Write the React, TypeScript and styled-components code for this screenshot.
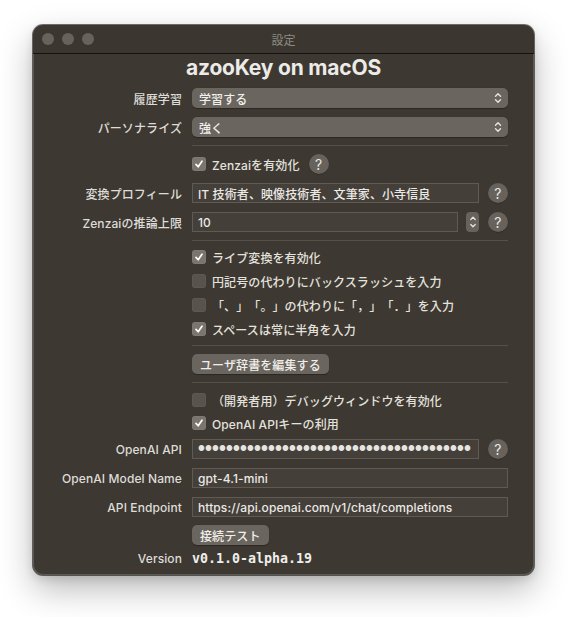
import React from "react";
import styled, { createGlobalStyle } from "styled-components";

const Global = createGlobalStyle`
  html, body { margin: 0; padding: 0; background: #ffffff; }
  body {
    font-family: Inter, "Noto Sans CJK JP", sans-serif;
    -webkit-font-smoothing: antialiased;
    text-spacing-trim: space-all;
  }
`;

const Page = styled.div`
  width: 568px;
  height: 617px;
  padding: 25px 0 0 33px;
  box-sizing: border-box;
`;

const Window = styled.div`
  width: 501px;
  height: 550px;
  box-sizing: border-box;
  background: #3d3831;
  border-radius: 10px;
  overflow: hidden;
  box-shadow: 0 0 0 1px rgba(0, 0, 0, 0.55), inset 0 0 0 1px rgba(255, 255, 255, 0.16),
    0 14px 34px rgba(0, 0, 0, 0.28), 0 4px 10px rgba(0, 0, 0, 0.12);
  display: flex;
  flex-direction: column;
`;

const TitleBar = styled.div`
  height: 28px;
  flex: none;
  display: flex;
  align-items: center;
  position: relative;
  background: #3b3730;
  border-bottom: 1px solid #141311;
`;

const Lights = styled.div`
  display: flex;
  gap: 8px;
  padding-left: 9px;
`;

const Light = styled.span`
  width: 12px;
  height: 12px;
  border-radius: 50%;
  background: #67625b;
`;

const Title = styled.div`
  position: absolute;
  left: 0;
  right: 0;
  text-align: center;
  font-size: 12px;
  color: #8f8a83;
  pointer-events: none;
`;

const Heading = styled.h1`
  margin: 0;
  height: 28px;
  line-height: 28px;
  text-align: center;
  font-size: 21px;
  font-weight: 700;
  color: #ecebe8;
  letter-spacing: -0.2px;
`;

const Form = styled.div`
  display: flex;
  flex-direction: column;
  font-weight: 500;
  letter-spacing: 0.1px;
`;

const Row = styled.div<{ $mt: number; $h?: number }>`
  display: grid;
  grid-template-columns: 149px 316px;
  column-gap: 10px;
  align-items: center;
  margin-top: ${(p) => p.$mt}px;
  height: ${(p) => p.$h ?? 20}px;
`;

const Label = styled.div`
  text-align: right;
  font-size: 12px;
  color: #dedcd8;
  white-space: nowrap;
`;

const Cell = styled.div`
  display: flex;
  align-items: center;
  gap: 9px;
  min-width: 0;
`;

const Separator = styled.div<{ $mt: number }>`
  margin: ${(p) => p.$mt}px 0 0 159px;
  width: 316px;
  height: 1px;
  background: #55504a;
`;

const Popup = styled.div`
  flex: 1;
  height: 20px;
  border-radius: 5px;
  background: #6a655e;
  display: flex;
  align-items: center;
  justify-content: space-between;
  padding: 0 6px 0 7px;
  font-size: 12px;
  color: #f2f0ed;
  box-shadow: 0 0.5px 1px rgba(0, 0, 0, 0.3);
`;

const Field = styled.div`
  flex: 1;
  min-width: 0;
  height: 20px;
  box-sizing: border-box;
  background: #443f38;
  border: 1px solid #5f5a53;
  display: flex;
  align-items: center;
  padding: 0 5px;
  font-size: 12px;
  color: #ebe9e6;
  white-space: nowrap;
  overflow: hidden;
`;

const Secret = styled.div`
  display: flex;
  overflow: hidden;
`;

const Dot = styled.span`
  width: 7px;
  flex: none;
  text-align: center;
  font-size: 7.5px;
  line-height: 10px;
  letter-spacing: 0;
  color: #e6e4e0;
  overflow: hidden;
`;

const Help = styled.div`
  width: 20px;
  height: 20px;
  flex: none;
  border-radius: 50%;
  background: #67625b;
  color: #e9e7e3;
  font-size: 14px;
  font-weight: 400;
  display: flex;
  align-items: center;
  justify-content: center;
  box-shadow: 0 0.5px 1px rgba(0, 0, 0, 0.3);
`;

const Stepper = styled.div`
  width: 13px;
  height: 20px;
  flex: none;
  border-radius: 4px;
  background: #67625b;
  display: flex;
  align-items: center;
  justify-content: center;
  margin-left: -1px;
`;

const CheckLine = styled.label`
  display: flex;
  align-items: center;
  gap: 6px;
  font-size: 12px;
  color: #e4e2de;
  white-space: nowrap;
`;

const Box = styled.span<{ $on: boolean }>`
  width: 14px;
  height: 14px;
  flex: none;
  border-radius: 3px;
  background: ${(p) => (p.$on ? "#7a756d" : "#58534c")};
  box-shadow: inset 0 0 0 0.5px rgba(255, 255, 255, 0.08);
  display: flex;
  align-items: center;
  justify-content: center;
`;

const Button = styled.div`
  height: 20px;
  box-sizing: border-box;
  padding: 0 8px;
  border-radius: 5px;
  background: #6a655e;
  color: #f0eeea;
  font-size: 12px;
  display: flex;
  align-items: center;
  box-shadow: 0 0.5px 1px rgba(0, 0, 0, 0.3);
`;

const Version = styled.div`
  font-family: "DejaVu Sans Mono", "Liberation Mono", monospace;
  font-weight: 700;
  font-size: 13.3px;
  letter-spacing: 0;
  color: #efeeeb;
`;

const UpDown = () => (
  <svg width="8" height="12" viewBox="0 0 8 12" fill="none" stroke="#e8e6e2" strokeWidth="1.4" strokeLinecap="round" strokeLinejoin="round">
    <path d="M1.5 4.2 L4 1.8 L6.5 4.2" />
    <path d="M1.5 7.8 L4 10.2 L6.5 7.8" />
  </svg>
);

const StepArrows = () => (
  <svg width="8" height="16" viewBox="0 0 8 16" fill="none" stroke="#e8e6e2" strokeWidth="1.3" strokeLinecap="round" strokeLinejoin="round">
    <path d="M1.8 5.5 L4 3.3 L6.2 5.5" />
    <path d="M1.8 10.5 L4 12.7 L6.2 10.5" />
  </svg>
);

const Check = () => (
  <svg width="10" height="10" viewBox="0 0 10 10" fill="none" stroke="#ffffff" strokeWidth="1.7" strokeLinecap="round" strokeLinejoin="round">
    <path d="M2 5.4 L4.2 7.8 L8 2.2" />
  </svg>
);

const CheckItem = ({ on, children }: { on: boolean; children: React.ReactNode }) => (
  <CheckLine>
    <Box $on={on}>{on && <Check />}</Box>
    <span>{children}</span>
  </CheckLine>
);

const SECRET_LENGTH = 39;

export default function App() {
  return (
    <>
      <Global />
      <Page>
        <Window>
          <TitleBar>
            <Lights>
              <Light />
              <Light />
              <Light />
            </Lights>
            <Title>設定</Title>
          </TitleBar>
          <Heading>azooKey on macOS</Heading>
          <Form>
            <Row $mt={6}>
              <Label>履歴学習</Label>
              <Cell>
                <Popup>
                  <span>学習する</span>
                  <UpDown />
                </Popup>
              </Cell>
            </Row>
            <Row $mt={9}>
              <Label>パーソナライズ</Label>
              <Cell>
                <Popup>
                  <span>強く</span>
                  <UpDown />
                </Popup>
              </Cell>
            </Row>
            <Separator $mt={8} />
            <Row $mt={8}>
              <Label />
              <Cell>
                <CheckItem on>Zenzaiを有効化</CheckItem>
                <Help>?</Help>
              </Cell>
            </Row>
            <Row $mt={9}>
              <Label>変換プロフィール</Label>
              <Cell>
                <Field>IT 技術者、映像技術者、文筆家、小寺信良</Field>
                <Help>?</Help>
              </Cell>
            </Row>
            <Row $mt={9}>
              <Label>Zenzaiの推論上限</Label>
              <Cell>
                <Field>10</Field>
                <Stepper>
                  <StepArrows />
                </Stepper>
                <Help>?</Help>
              </Cell>
            </Row>
            <Separator $mt={8} />
            <Row $mt={7} $h={18}>
              <Label />
              <CheckItem on>ライブ変換を有効化</CheckItem>
            </Row>
            <Row $mt={6} $h={18}>
              <Label />
              <CheckItem on={false}>円記号の代わりにバックスラッシュを入力</CheckItem>
            </Row>
            <Row $mt={6} $h={18}>
              <Label />
              <CheckItem on={false}>「、」「。」の代わりに「，」「．」を入力</CheckItem>
            </Row>
            <Row $mt={6} $h={18}>
              <Label />
              <CheckItem on>スペースは常に半角を入力</CheckItem>
            </Row>
            <Separator $mt={7} />
            <Row $mt={8}>
              <Label />
              <Cell>
                <Button>ユーザ辞書を編集する</Button>
              </Cell>
            </Row>
            <Separator $mt={8} />
            <Row $mt={8} $h={18}>
              <Label />
              <CheckItem on={false}>（開発者用）デバッグウィンドウを有効化</CheckItem>
            </Row>
            <Row $mt={5} $h={18}>
              <Label />
              <CheckItem on>OpenAI APIキーの利用</CheckItem>
            </Row>
            <Row $mt={7}>
              <Label>OpenAI API</Label>
              <Cell>
                <Field>
                  <Secret>
                    {Array.from({ length: SECRET_LENGTH }, (_, i) => (
                      <Dot key={i}>●</Dot>
                    ))}
                  </Secret>
                </Field>
                <Help>?</Help>
              </Cell>
            </Row>
            <Row $mt={9}>
              <Label>OpenAI Model Name</Label>
              <Cell>
                <Field>gpt-4.1-mini</Field>
              </Cell>
            </Row>
            <Row $mt={9}>
              <Label>API Endpoint</Label>
              <Cell>
                <Field>https://api.openai.com/v1/chat/completions</Field>
              </Cell>
            </Row>
            <Row $mt={8}>
              <Label />
              <Cell>
                <Button>接続テスト</Button>
              </Cell>
            </Row>
            <Row $mt={4} $h={18}>
              <Label>Version</Label>
              <Version>v0.1.0-alpha.19</Version>
            </Row>
          </Form>
        </Window>
      </Page>
    </>
  );
}
